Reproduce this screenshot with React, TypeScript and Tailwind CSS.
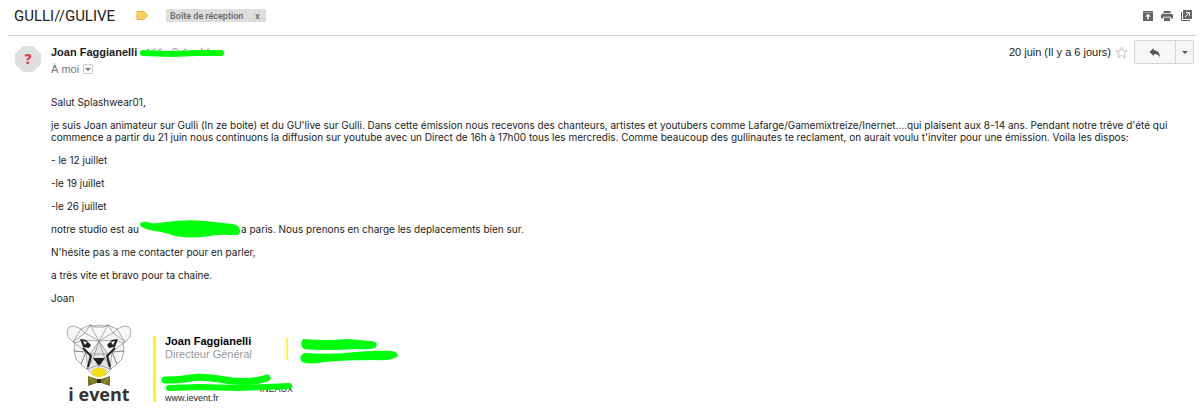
import React from 'react';

const paragraphs = ['- le 12 juillet', '-le 19 juillet', '-le 26 juillet'];

const LabelIcon = () => (
  <svg viewBox="0 0 12 9" className="h-[9px] w-3">
    <path d="M1 .5h7L11.500 4.500 8 8.500H1z" fill="#fbcf5e" stroke="#e8b33c" strokeWidth="1" />
  </svg>
);

const CaretIcon = ({ className }: { className: string }) => (
  <svg viewBox="0 0 6 3" className={className} fill="currentColor">
    <path d="M0 0h6L3 3z" />
  </svg>
);

const CollapseIcon = () => (
  <svg viewBox="0 0 10 10" className="size-[10px]">
    <path d="M0 0h10v10H0z" fill="#666" />
    <path d="M0 1.500h10" stroke="#aaa" strokeWidth=".7" />
    <path d="M5 2.800 2.200 5.600h2v2.600h1.600V5.600h2z" fill="#fff" />
  </svg>
);

const PrintIcon = () => (
  <svg viewBox="0 0 12 10" className="h-[10px] w-3" fill="#666">
    <path d="M2.500 0h7v2h-7zM1.500 2.800h9q1.500 0 1.500 1.500v3.200H9.800V5.800H2.200v1.700H0V4.300q0-1.500 1.500-1.500z" />
    <path d="M3 6.600h6V10H3z" />
  </svg>
);

const NewWindowIcon = () => (
  <svg viewBox="0 0 11 11" className="size-[11px]">
    <path d="M.5 2v8.500H9" fill="none" stroke="#666" />
    <path d="M2 0h9v9H2z" fill="#666" />
    <path d="M4 7 8 3M5 2.500h3.500V6" fill="none" stroke="#fff" strokeWidth="1" />
  </svg>
);

const StarIcon = () => (
  <svg viewBox="0 0 13 13" className="size-[13px]" fill="#fff" stroke="#c4c4c4">
    <path d="M6.500 1 8 5h4.200L8.900 7.600l1.200 4.200-3.600-2.500-3.600 2.500 1.200-4.200L.8 5H5z" />
  </svg>
);

const ReplyIcon = () => (
  <svg viewBox="0 0 12 9" className="h-[9px] w-3">
    <path d="M4.800 0v2.300C8.500 2.300 10.600 4.500 11 9 9.500 6.700 8 5.900 4.800 5.900v2.300L.5 4.100z" fill="#555" />
  </svg>
);

const Avatar = () => (
  <svg viewBox="0 0 26 26" className="size-[26px] shrink-0">
    <path d="M8 0h10l8 8v10l-8 8H8l-8-8V8z" fill="#e0e0e0" />
    <text x="13" y="18" textAnchor="middle" className="fill-[#d9444a] font-['Open_Sans',sans-serif] text-[14px] font-extrabold">?</text>
  </svg>
);

const BearLogo = () => (
  <svg viewBox="0 0 66 62" className="h-[62px] w-[66px]" strokeLinejoin="round">
    <path
      d="M15 5 8 2 3 3 1 7l1 6 5 5 2 1-1 8 2 8 5 5 7 6 5 5 4 3h4l4-3 5-5 7-6 5-5 2-8-1-8 2-1 5-5 1-6-2-4-5-1-7 3-9-4-4 1-5-1-5 1-4-1z"
      fill="#f7f7f7"
    />
    <path d="m33 17-9 13-3 15 8 3h8l8-3-3-15z" fill="#e4e4e4" />
    <g fill="none" stroke="#777" strokeWidth=".6">
      <path d="M15 5 8 2 3 3 1 7l1 6 5 5 2 1-1 8 2 8 5 5 7 6 5 5h12l5-5 7-6 5-5 2-8-1-8 2-1 5-5 1-6-2-4-5-1-7 3-9-4-4 1-5-1-5 1-4-1z" />
      <path d="m15 5-8 13 12-9 5-8 9 16 9-16 5 8 12 9-8-13M15 5l4 4 14 8 14-8 4-4M24 1l4 2h10l4-2" />
      <path d="m9 19 8-3 16 1 16-1 8 3M7 18l13 10-12-1 12 1-5 12 5-12 2 18M59 18 46 28l12-1-12 1 5 12-5-12-2 18" />
      <path d="m33 17-9 13-3 15 6-10 6-18 6 18 6 10-3-15zM24 30h18M21 45l12-4 12 4M33 41v6" />
    </g>
    <path d="m14 15 6 1 5 5-2 3-6-1zM52 15l-6 1-5 5 2 3 6-1z" fill="#222" />
    <path d="m17 17 4 1-2 3zM49 17l-4 1 2 3z" fill="#fff" />
    <path d="m17 24 8 8-3 11M49 24l-8 8 3 11" fill="none" stroke="#222" strokeWidth="2" strokeLinejoin="miter" />
    <path d="M27 34h12l-5 7h-2z" fill="#222" />
    <path d="m25 47 5-3h6l5 3-2 4-4 2h-4l-4-2z" fill="#f2df16" />
    <path d="m22 52 9 3h4l9-3v10l-9-3h-4l-9 3z" fill="#7a7222" />
    <path d="M31 55h4v4h-4z" fill="#222" />
    <path d="m24 54 4 5M42 54l-4 5" stroke="#b6a82c" />
  </svg>
);

const App: React.FC = () => {
  return (
    <div className="bg-white font-['Liberation_Sans',Arial,sans-serif] text-[11px] leading-3 text-[#222]">
      <header className="ml-2 mr-1 flex h-9 items-center border-b border-[#d0d0d0] pl-1.5 pr-1 pb-1 font-[Roboto,sans-serif]">
        <h1 className="text-[15px] leading-5">GULLI//GULIVE</h1>
        <span className="ml-[21px]"><LabelIcon /></span>
        <div className="ml-[18px] flex h-[13px] items-center bg-[#ddd] px-1 text-[9px] font-medium text-[#666]">
          <span>Boîte de réception</span>
          <button className="ml-3 pr-0.5" aria-label="Retirer le libellé">x</button>
        </div>
        <div className="ml-auto flex items-center gap-2">
          <button aria-label="Tout réduire"><CollapseIcon /></button>
          <button aria-label="Imprimer"><PrintIcon /></button>
          <button aria-label="Nouvelle fenêtre"><NewWindowIcon /></button>
        </div>
      </header>

      <section className="flex pl-[15px] pr-[6px] pt-1">
        <div className="pt-1.5"><Avatar /></div>
        <div className="ml-2.5 pt-1.5">
          <div className="flex items-center">
            <h2 className="font-bold">Joan Faggianelli</h2>
            <svg viewBox="0 0 86 12" className="ml-0.5 h-3 w-[86px]" fill="none" strokeLinecap="round">
              <path d="m8 4 2-1m4 1 2-1m4 1 2-1m11 1q3-3 6 0m6 0 2-1m15 1 1-2m5 2 2-1" stroke="#888" strokeWidth="1" />
              <path d="M4 7 32 8 58 7 82 7" stroke="#00ff0c" strokeWidth="6" />
            </svg>
          </div>
          <div className="mt-[5px] flex items-center text-[#777]">
            <span>À moi</span>
            <button className="ml-1 flex size-[10px] items-center justify-center rounded-[1px] border border-[#ccc]" aria-label="Afficher les détails">
              <CaretIcon className="h-[3px] w-1.5" />
            </button>
          </div>
        </div>
        <div className="ml-auto flex h-6 items-center">
          <span>20 juin (Il y a 6 jours)</span>
          <button className="ml-1" aria-label="Suivre"><StarIcon /></button>
          <div className="ml-1.5 flex h-6 rounded-[2px] border border-[#d5d5d5] bg-[#f6f6f6] text-[#555]">
            <button className="flex w-10 items-center justify-center" aria-label="Répondre"><ReplyIcon /></button>
            <button className="flex w-[18px] items-center justify-center border-l border-[#d5d5d5]" aria-label="Plus">
              <CaretIcon className="h-[3px] w-1.5" />
            </button>
          </div>
        </div>
      </section>

      <main className="flex flex-col gap-[11px] pl-[51px] pr-5 pt-[21px] font-[Inter,'Liberation_Sans',sans-serif] text-[10px] leading-3">
        <p>Salut Splashwear01,</p>
        <p>
          je suis Joan animateur sur Gulli (In ze boite) et du GU'live sur Gulli. Dans cette émission nous recevons des chanteurs, artistes et youtubers comme Lafarge/Gamemixtreize/Inernet....qui plaisent aux 8-14 ans. Pendant notre trêve d'été qui commence a partir du 21 juin nous continuons la diffusion sur youtube avec un Direct de 16h à 17h00 tous les mercredis. Comme beaucoup des gullinautes te reclament, on aurait voulu t'inviter pour une émission. Voila les dispos:
        </p>
        {paragraphs.map((line) => <p key={line}>{line}</p>)}
        <p className="flex h-3 items-center">
          <span>notre studio est au</span>
          <svg viewBox="0 0 102 18" className="h-[18px] w-[102px]" fill="#00ff0c">
            <path d="M1 5C1 1 6 1 12 3q6 1 14-1Q48-1 66 1t28 3q8 2 7 8-1 4-8 3-12-1-22 1-18 3-35 0-8-3-20-5Q3 9 1 5z" />
          </svg>
          <span>a paris. Nous prenons en charge les deplacements bien sur.</span>
        </p>
        <p>N'hésite pas a me contacter pour en parler,</p>
        <p>a très vite et bravo pour ta chaine.</p>
        <p>Joan</p>
      </main>

      <footer className="flex pl-[66px] pt-5">
        <div className="flex w-[66px] flex-col items-center">
          <BearLogo />
          <span className="whitespace-nowrap font-['Open_Sans',sans-serif] text-[18px] font-bold leading-4 text-[#333]">i event</span>
        </div>
        <div className="ml-[21px] mt-3 h-[66px] w-[3px] bg-[#fff01f]" />
        <div className="ml-[9px] mt-[11px] w-[121px]">
          <p className="font-bold text-black">Joan Faggianelli</p>
          <p className="mt-px text-[#999]">Directeur Général</p>
          <svg viewBox="0 0 134 24" className="-ml-1 mt-3 h-6 w-[134px] max-w-none" fill="none" strokeLinecap="round" strokeLinejoin="round">
            <text x="132" y="20" textAnchor="end" className="fill-[#333] text-[9px]">INEAUX</text>
            <path d="M4 8q16 0 26-2t34 2 42-2" stroke="#00ff0c" strokeWidth="7" />
            <path d="m8 16 30-1 40 1 50-2" stroke="#00ff0c" strokeWidth="6" />
          </svg>
          <p className="-mt-1 text-[9px] leading-3">
            <a href="#">www.ievent.fr</a>
          </p>
        </div>
        <div className="mt-3.5 h-[22px] w-0.5 bg-[#fff04a]" />
        <svg viewBox="0 0 98 26" className="ml-3 mt-3.5 h-[26px] w-[98px]" fill="#00ff0c">
          <path d="M3 1q22 2 44 0l24 2q8 1 5 6-3 3-20 2Q20 13 4 11-1 7 3 1z" />
          <path d="M4 15q28 2 52-1 20-2 36-1 6 1 6 5-4 5-24 4-30 0-50 2-14 3-22 0-4-5 2-9z" />
        </svg>
      </footer>
    </div>
  );
};

export default App;
